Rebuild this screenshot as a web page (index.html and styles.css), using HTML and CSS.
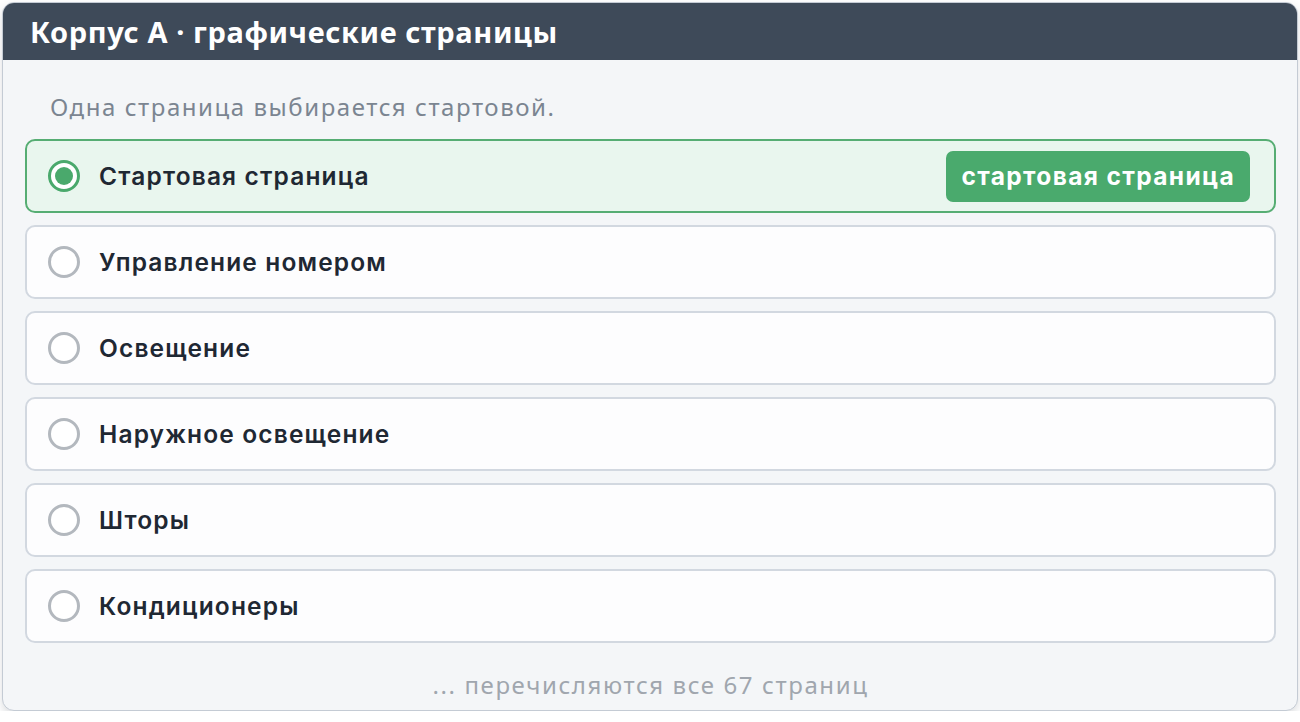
FILE: index.html
```html
<!DOCTYPE html>
<html lang="ru">
<head>
<meta charset="utf-8">
<title>Корпус A · графические страницы</title>
<link rel="stylesheet" href="styles.css">
</head>
<body>
<div class="card">
  <div class="card-header">Корпус A · графические страницы</div>
  <div class="card-body">
    <p class="hint">Одна страница выбирается стартовой.</p>
    <ul class="pages">
      <li class="page selected"><span class="radio"></span><span class="label">Стартовая страница</span><span class="badge">стартовая страница</span></li>
      <li class="page"><span class="radio"></span><span class="label">Управление номером</span></li>
      <li class="page"><span class="radio"></span><span class="label">Освещение</span></li>
      <li class="page"><span class="radio"></span><span class="label">Наружное освещение</span></li>
      <li class="page"><span class="radio"></span><span class="label">Шторы</span></li>
      <li class="page"><span class="radio"></span><span class="label">Кондиционеры</span></li>
    </ul>
    <p class="more">... перечисляются все 67 страниц</p>
  </div>
</div>
</body>
</html>
```
FILE: styles.css
```css
* { box-sizing: border-box; }
html, body { margin: 0; padding: 0; background: #ffffff; }
body { padding: 2px 2px 0 2px; font-family: "Inter", "Noto Sans", sans-serif; }

.card {
  width: 1296px;
  height: 709px;
  border: 1px solid #c4cbd4;
  border-radius: 12px;
  background: #f4f6f8;
  overflow: hidden;
  box-shadow: 0 4px 8px rgba(60, 70, 85, 0.18);
  display: flex;
  flex-direction: column;
}

.card-header {
  height: 57px;
  background: #3e4a59;
  color: #ffffff;
  font-family: "Noto Sans", "Open Sans", sans-serif;
  font-weight: 700;
  font-size: 29px;
  letter-spacing: 0.6px;
  line-height: 57px;
  padding-left: 27px;
  flex: none;
}

.card-body {
  padding: 28px 21px 0 22px;
  display: flex;
  flex-direction: column;
}

.hint {
  margin: 0 0 13px 0;
  padding-left: 25px;
  font-family: "Noto Sans", "Open Sans", sans-serif;
  font-size: 24px;
  letter-spacing: 1.55px;
  line-height: 38px;
  color: #7b8591;
}

.pages {
  list-style: none;
  margin: 0;
  padding: 0;
  display: flex;
  flex-direction: column;
  gap: 12px;
}

.page {
  height: 74px;
  border: 2px solid #d2d8e0;
  border-radius: 10px;
  background: #fdfdfe;
  display: flex;
  align-items: center;
  padding: 0 24px 0 21px;
  gap: 19px;
}

.page.selected {
  border-color: #56ad73;
  background: #e9f6ee;
}

.radio {
  width: 32px;
  height: 32px;
  border-radius: 50%;
  border: 3px solid #b3b8be;
  background: #ffffff;
  flex: none;
  position: relative;
}

.selected .radio {
  border-color: #4aa96c;
  background: #ffffff;
}

.selected .radio::after {
  content: "";
  position: absolute;
  left: 4px;
  top: 4px;
  width: 18px;
  height: 18px;
  border-radius: 50%;
  background: #4aa96c;
}

.label {
  font-size: 24.5px;
  font-weight: 600;
  color: #1f2833;
  letter-spacing: 1.15px;
  flex: 1;
}

.badge {
  background: #4aaa6d;
  color: #ffffff;
  font-size: 24.5px;
  font-weight: 700;
  letter-spacing: 1.35px;
  height: 51px;
  line-height: 51px;
  padding: 0 15px;
  border-radius: 7px;
}

.more {
  margin: 27px 0 0 0;
  text-align: center;
  font-family: "Noto Sans", "Open Sans", sans-serif;
  font-size: 24px;
  letter-spacing: 1.6px;
  line-height: 30px;
  color: #a0a6ae;
}
```
